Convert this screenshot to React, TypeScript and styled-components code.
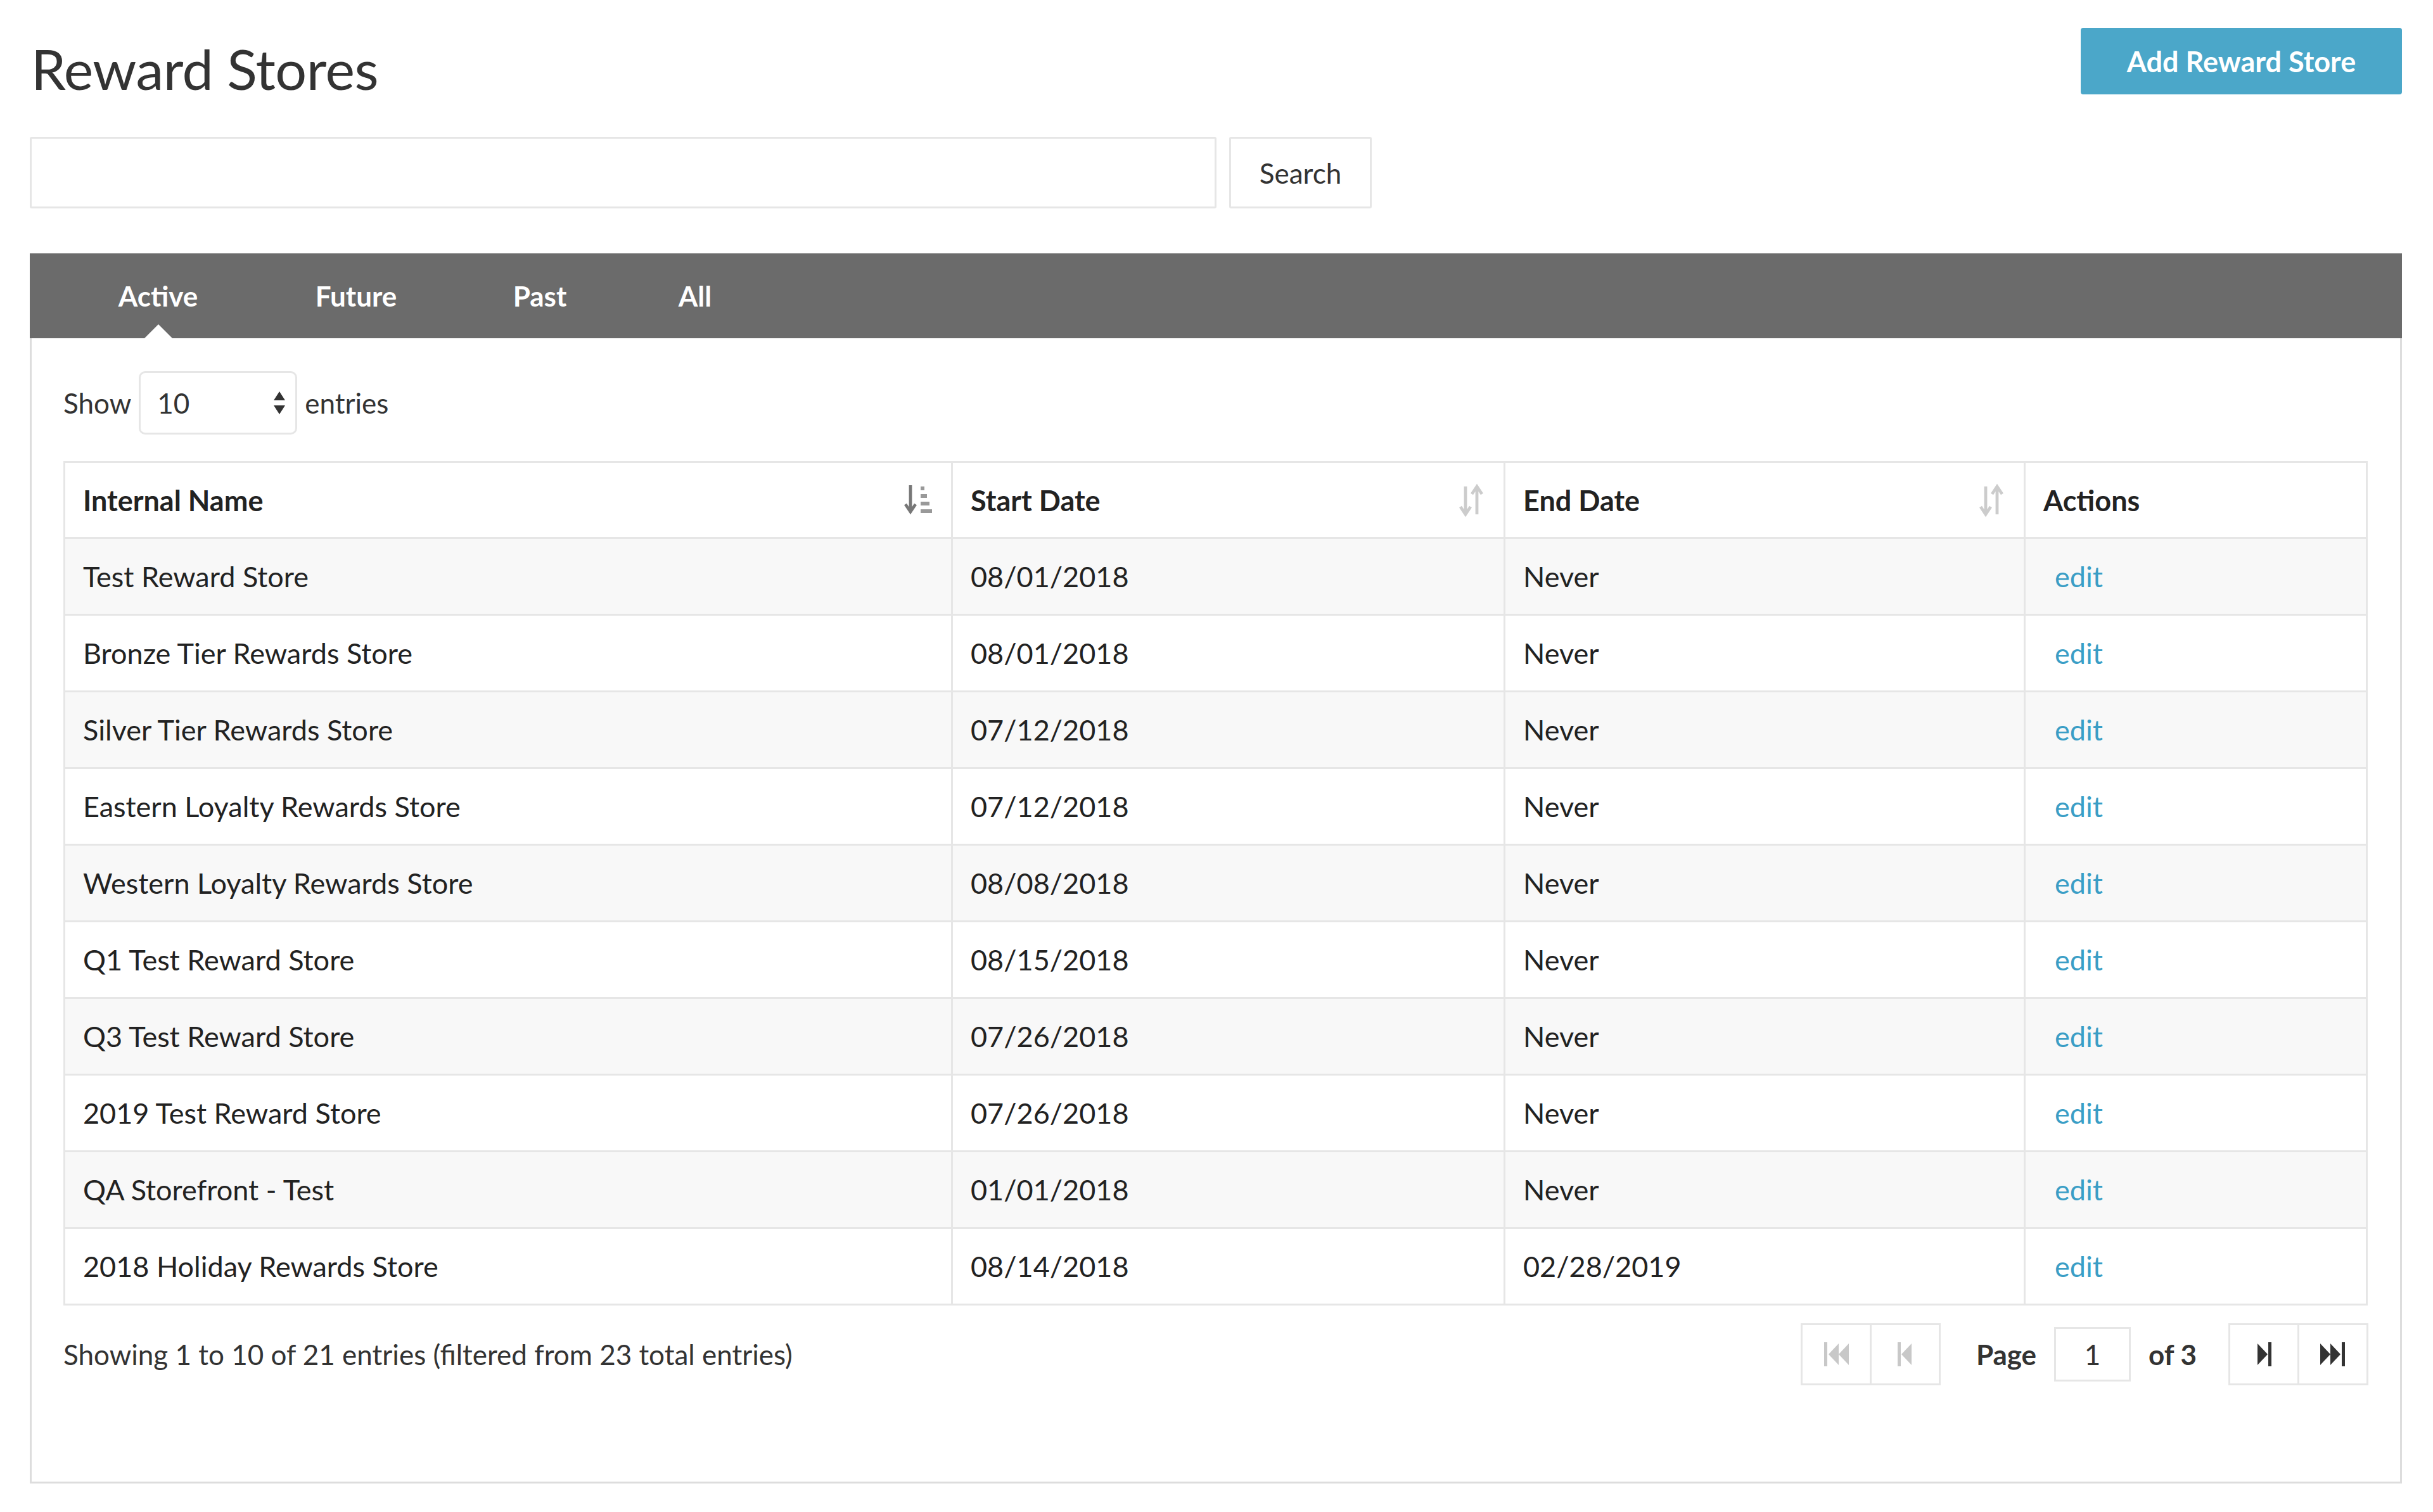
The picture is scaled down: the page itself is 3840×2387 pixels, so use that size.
import React from "react";
import styled, { createGlobalStyle } from "styled-components";

const Global = createGlobalStyle`
  html, body { margin: 0; padding: 0; background: #fff; }
  body { font-family: Lato, "Open Sans", sans-serif; color: #333; }
`;

const Page = styled.div`
  width: 3840px; height: 2387px; box-sizing: border-box;
  padding: 44px 49px 0 47px; display: flex; flex-direction: column;
`;
const Header = styled.div`display: flex; justify-content: space-between; align-items: flex-start;`;
const Title = styled.h1`
  margin: 20px 0 0 2px; font-weight: 400; font-size: 88px; line-height: 1; color: #333; letter-spacing: -0.5px;
`;
const PrimaryButton = styled.button`
  width: 507px; height: 105px; border: none; border-radius: 4px; background: #4ba7c9;
  color: #fff; font-family: inherit; font-weight: 700; font-size: 45px;
`;
const SearchRow = styled.div`display: flex; gap: 20px; margin-top: 64px;`;
const SearchInput = styled.input`
  width: 1873px; height: 113px; box-sizing: border-box; border: 3px solid #e6e6e6; border-radius: 3px;
`;
const Button = styled.button`
  width: 225px; height: 113px; border: 3px solid #e6e6e6; background: #fff; border-radius: 3px;
  font-family: inherit; font-size: 44px; color: #333;
`;
const Panel = styled.div`
  margin-top: 71px; height: 1942px; box-sizing: border-box; border: 3px solid #ddd; border-top: none;
  display: flex; flex-direction: column;
`;
const TabBar = styled.div`
  height: 134px; background: #6b6b6b; display: flex; align-items: center; padding-left: 20px; margin: 0 -3px;
`;
const Tab = styled.div<{ $active?: boolean; $w: number }>`
  position: relative; width: ${p => p.$w}px; height: 100%; display: flex; align-items: center; justify-content: center;
  color: #fff; font-weight: 700; font-size: 44px;
  &::after {
    content: ""; display: ${p => (p.$active ? "block" : "none")}; position: absolute; bottom: 0; left: 50%;
    margin-left: -22px; border: 22px solid transparent; border-bottom-color: #fff; border-top: none;
  }
`;
const Body = styled.div`padding: 0 50px 0 50px; display: flex; flex-direction: column;`;
const ShowRow = styled.div`display: flex; align-items: center; gap: 12px; margin-top: 52px; font-size: 44px; color: #333;`;
const Select = styled.div`
  width: 250px; height: 100px; box-sizing: border-box; border: 3px solid #e6e6e6; border-radius: 10px;
  display: flex; align-items: center; justify-content: space-between; padding: 0 14px 0 26px; font-size: 44px;
`;
const Table = styled.table`
  margin-top: 42px; border-collapse: collapse; width: 3637px; font-size: 45px; color: #222;
  th, td { border: 3px solid #e6e6e6; text-align: left; padding: 0 28px; }
  th { height: 117px; font-weight: 700; }
  td { height: 118px; }
  tbody tr:nth-child(odd) td { background: #f8f8f8; }
`;
const ThInner = styled.div`display: flex; align-items: center; justify-content: space-between;`;
const Edit = styled.a`color: #3a9ec6; text-decoration: none; padding-left: 18px;`;
const Footer = styled.div`display: flex; align-items: center; justify-content: space-between; margin-top: 28px; font-size: 44px; color: #333;`;
const Pager = styled.div`display: flex; align-items: center;`;
const PagerGroup = styled.div`display: flex; border: 3px solid #e6e6e6;`;
const PagerBtn = styled.div<{ $dim?: boolean }>`
  width: 106px; height: 92px; display: flex; align-items: center; justify-content: center;
  color: ${p => (p.$dim ? "#c8c8c8" : "#333")};
  & + & { border-left: 3px solid #e6e6e6; }
`;
const PageLabel = styled.span`font-weight: 700; margin: 0 28px 0 56px;`;
const PageBox = styled.div`
  width: 115px; height: 80px; border: 3px solid #e6e6e6; display: flex; align-items: center; justify-content: center;
`;
const OfLabel = styled.span`font-weight: 700; margin: 0 50px 0 28px;`;

const SortIcon = ({ active }: { active?: boolean }) => (
  <svg width="46" height="56" viewBox="0 0 23 28">
    {active ? (
      <>
        <path d="M5 2v20M1 17l4 6 4-6" stroke="#777" strokeWidth="2.4" fill="none" />
        <rect x="13" y="3" width="3" height="3" fill="#999" />
        <rect x="13" y="9" width="5" height="3" fill="#999" />
        <rect x="13" y="15" width="7" height="3" fill="#999" />
        <rect x="13" y="21" width="9" height="3" fill="#999" />
      </>
    ) : (
      <>
        <path d="M7 3v22M3 19l4 6 4-6" stroke="#ccc" strokeWidth="2.4" fill="none" />
        <path d="M16 25V3M12 9l4-6 4 6" stroke="#ccc" strokeWidth="2.4" fill="none" />
      </>
    )}
  </svg>
);

const Skip = ({ dir, dbl }: { dir: "l" | "r"; dbl?: boolean }) => (
  <svg width="52" height="42" viewBox="0 0 26 21" style={{ transform: dir === "l" ? "scaleX(-1)" : undefined }}>
    {dbl ? (
      <>
        <path d="M3 2l8 8.5-8 8.5z M11 2l8 8.5-8 8.5z" fill="currentColor" />
        <rect x="20" y="1" width="2.5" height="19" fill="currentColor" />
      </>
    ) : (
      <>
        <path d="M8 2l8 8.5-8 8.5z" fill="currentColor" />
        <rect x="16.5" y="1" width="2.5" height="19" fill="currentColor" />
      </>
    )}
  </svg>
);

const rows = [
  ["Test Reward Store", "08/01/2018", "Never"],
  ["Bronze Tier Rewards Store", "08/01/2018", "Never"],
  ["Silver Tier Rewards Store", "07/12/2018", "Never"],
  ["Eastern Loyalty Rewards Store", "07/12/2018", "Never"],
  ["Western Loyalty Rewards Store", "08/08/2018", "Never"],
  ["Q1 Test Reward Store", "08/15/2018", "Never"],
  ["Q3 Test Reward Store", "07/26/2018", "Never"],
  ["2019 Test Reward Store", "07/26/2018", "Never"],
  ["QA Storefront - Test", "01/01/2018", "Never"],
  ["2018 Holiday Rewards Store", "08/14/2018", "02/28/2019"],
];

export default function App() {
  return (
    <>
      <Global />
      <Page>
        <Header>
          <Title>Reward Stores</Title>
          <PrimaryButton>Add Reward Store</PrimaryButton>
        </Header>
        <SearchRow>
          <SearchInput />
          <Button>Search</Button>
        </SearchRow>
        <Panel>
          <TabBar>
            <Tab $active $w={365}>Active</Tab>
            <Tab $w={260}>Future</Tab>
            <Tab $w={320}>Past</Tab>
            <Tab $w={170}>All</Tab>
          </TabBar>
          <Body>
            <ShowRow>
              <span>Show</span>
              <Select>
                <span>10</span>
                <svg width="22" height="44" viewBox="0 0 11 22">
                  <path d="M1 9l4.5-7 4.5 7zM1 13l4.5 7 4.5-7z" fill="#333" />
                </svg>
              </Select>
              <span>entries</span>
            </ShowRow>
            <Table>
              <colgroup>
                <col style={{ width: 1401 }} />
                <col style={{ width: 872 }} />
                <col style={{ width: 821 }} />
                <col />
              </colgroup>
              <thead>
                <tr>
                  <th><ThInner>Internal Name<SortIcon active /></ThInner></th>
                  <th><ThInner>Start Date<SortIcon /></ThInner></th>
                  <th><ThInner>End Date<SortIcon /></ThInner></th>
                  <th>Actions</th>
                </tr>
              </thead>
              <tbody>
                {rows.map(r => (
                  <tr key={r[0]}>
                    <td>{r[0]}</td>
                    <td>{r[1]}</td>
                    <td>{r[2]}</td>
                    <td><Edit href="#">edit</Edit></td>
                  </tr>
                ))}
              </tbody>
            </Table>
            <Footer>
              <span>Showing 1 to 10 of 21 entries (filtered from 23 total entries)</span>
              <Pager>
                <PagerGroup>
                  <PagerBtn $dim><Skip dir="l" dbl /></PagerBtn>
                  <PagerBtn $dim><Skip dir="l" /></PagerBtn>
                </PagerGroup>
                <PageLabel>Page</PageLabel>
                <PageBox>1</PageBox>
                <OfLabel>of 3</OfLabel>
                <PagerGroup>
                  <PagerBtn><Skip dir="r" /></PagerBtn>
                  <PagerBtn><Skip dir="r" dbl /></PagerBtn>
                </PagerGroup>
              </Pager>
            </Footer>
          </Body>
        </Panel>
      </Page>
    </>
  );
}
